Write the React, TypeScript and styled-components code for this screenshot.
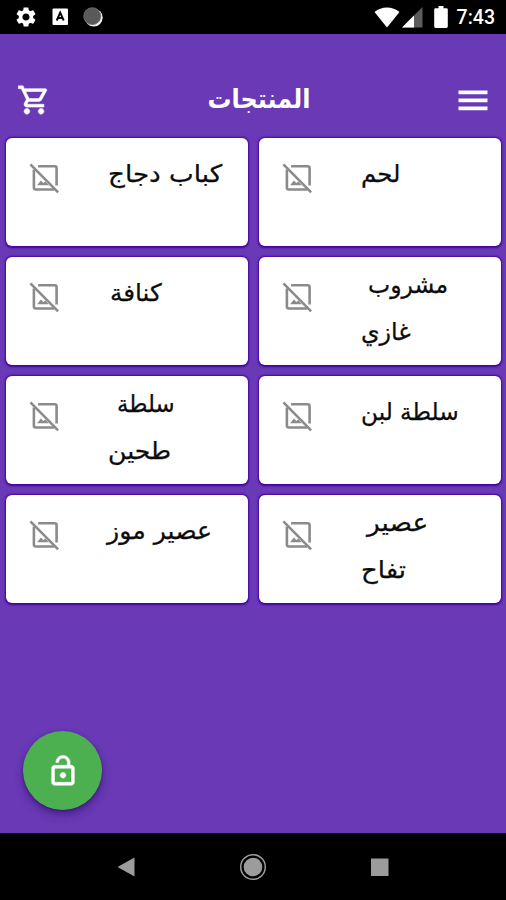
import React from "react";
import styled, { createGlobalStyle, css } from "styled-components";
import { MdOutlineShoppingCart, MdLockOpen, MdSettings } from "react-icons/md";

const Global = createGlobalStyle`
  * { box-sizing: border-box; }
  body { margin: 0; background: #000; }
  svg { display: block; flex: none; }
`;

const Screen = styled.div`
  width: 506px;
  height: 900px;
  display: flex;
  flex-direction: column;
  background: #6939b6;
  overflow: hidden;
  font-family: "DejaVu Sans", sans-serif;
`;

const StatusBar = styled.header`
  height: 34px;
  flex: none;
  display: flex;
  align-items: center;
  justify-content: space-between;
  padding: 0 11px 0 14px;
  background: #000;
  color: #fff;
`;

const StatusGroup = styled.div`
  display: flex;
  align-items: center;
`;

const Notifications = styled(StatusGroup)`
  gap: 14px;
`;

const Clock = styled.span`
  margin-left: 9px;
  padding-top: 1px;
  font: 500 19.5px/34px Roboto, sans-serif;
`;

const TopBar = styled.div`
  height: 104px;
  flex: none;
  display: flex;
  align-items: center;
  justify-content: space-between;
  padding: 28px 18px 0 17px;
  color: #fff;
`;

const boldIcon = css`
  path:not([fill="none"]) {
    stroke: currentColor;
    stroke-width: 0.4px;
  }
`;

const CartIcon = styled(MdOutlineShoppingCart)`
  ${boldIcon}
`;

const LockIcon = styled(MdLockOpen)`
  ${boldIcon}
`;

const Title = styled.h1`
  margin: 0 0 3px 8px;
  font-size: 26px;
  line-height: 40px;
  font-weight: 700;
  transform: scaleX(0.92);
`;

const Grid = styled.main`
  flex: 1;
  display: grid;
  grid-template-columns: 242px 242px;
  grid-auto-rows: 108px;
  gap: 10.9px 11px;
  align-content: start;
  padding: 0 6px;
`;

const Card = styled.article`
  display: grid;
  grid-template-columns: 102px 1fr;
  background: #fff;
  border-radius: 6px;
  box-shadow: 0 0.5px 2px 0.7px #4500a0;
`;

const Thumb = styled.div`
  padding: 23px 0 0 22px;
  color: #8b8b8b;
`;

const Name = styled.div<{ $lines: number }>`
  margin-top: ${(p) => (p.$lines > 1 ? -8 : 0)}px;
  color: #0c0c0c;
  font-size: 24px;
`;

const Line = styled.div<{ $indent: number; $stretch: number }>`
  width: max-content;
  height: 47px;
  margin-left: ${(p) => p.$indent}px;
  line-height: 72px;
  white-space: nowrap;
  transform: scaleX(${(p) => p.$stretch});
  transform-origin: left;
  -webkit-text-stroke: 0.25px currentColor;
`;

const FabRow = styled.div`
  flex: none;
  padding: 0 23px 23px;
`;

const Fab = styled.button`
  width: 79px;
  height: 79px;
  display: flex;
  align-items: center;
  justify-content: center;
  padding: 0;
  border: 0;
  border-radius: 50%;
  background: #4caf50;
  color: #fff;
  box-shadow: 0 5px 8px rgba(30, 0, 80, 0.4), 0 1px 3px rgba(30, 0, 80, 0.4);
`;

const NavBar = styled.nav`
  height: 67px;
  flex: none;
  display: flex;
  align-items: center;
  justify-content: center;
  gap: 99px;
  background: #000;
`;

type NameLine = { text: string; indent?: number; stretch?: number };

const products: NameLine[][] = [
  [{ text: "كباب دجاج", stretch: 1.092 }],
  [{ text: "لحم", stretch: 1.02 }],
  [{ text: "كنافة", indent: 1.5, stretch: 1.03 }],
  [{ text: "مشروب", indent: 7, stretch: 0.98 }, { text: "غازي", stretch: 0.99 }],
  [{ text: "سلطة", indent: 9, stretch: 0.95 }, { text: "طحين", stretch: 1.05 }],
  [{ text: "سلطة لبن", stretch: 0.967 }],
  [{ text: "عصير موز", indent: -1, stretch: 1.05 }],
  [{ text: "عصير", indent: 6, stretch: 1.1 }, { text: "تفاح", stretch: 1.08 }],
];

const KeyboardIcon = () => (
  <svg width="17" height="18" viewBox="0 0 17 18">
    <rect x="0.5" y="0.5" width="15.5" height="16.5" rx="1" fill="#fff" />
    <path d="M4.7 12.5 8.2 4.5 11.7 12.5M6 10h4.4" fill="none" stroke="#000" strokeWidth="1.9" />
  </svg>
);

const SyncIcon = () => (
  <svg width="20" height="20" viewBox="0 0 20 20">
    <circle cx="10.8" cy="10.6" r="8.9" fill="#f2f2f2" />
    <circle cx="9.3" cy="9.2" r="8.5" fill="#5a5a5a" stroke="#777" strokeWidth="0.8" />
  </svg>
);

const WifiIcon = () => (
  <svg width="26" height="21" viewBox="0 0 26 21">
    <path d="M0.5 5C7.5-1 18.5-1 25.5 5L13 20.5Z" fill="#fff" />
  </svg>
);

const SignalIcon = () => (
  <svg width="21" height="21" viewBox="0 0 21 21">
    <path d="M20.5 0V20.5H0Z" fill="#5c5c5c" />
    <path d="M12 8.5V20.5H0Z" fill="#fff" />
  </svg>
);

const BatteryIcon = () => (
  <svg width="14" height="22" viewBox="0 0 14 22">
    <path d="M4.5 0h5v2.3h3a1.3 1.3 0 0 1 1.3 1.3v17a1.3 1.3 0 0 1-1.3 1.3h-11a1.3 1.3 0 0 1-1.3-1.3v-17a1.3 1.3 0 0 1 1.3-1.3h3Z" fill="#fff" />
  </svg>
);

const SignalSlot = styled.span`
  margin: 1px 11px 0 2px;
`;

const MenuIcon = () => (
  <svg width="30" height="21" viewBox="0 0 30 21">
    <path d="M0.5 2.3H29.5M0.5 10.3H29.5M0.5 18.3H29.5" stroke="#fff" strokeWidth="3.8" />
  </svg>
);

const NoImageIcon = () => (
  <svg width="34" height="34" viewBox="0.4 0 34 34" fill="none" stroke="currentColor">
    <path d="M10.5 5.3H27Q29 5.3 29 7.3V24.5" strokeWidth="2.6" />
    <path d="M6.3 8.5V26.5Q6.3 28.500 8.3 28.5H26.5" strokeWidth="2.6" />
    <path d="M2.8 3.3 30.5 31.3" strokeWidth="2.6" />
    <path d="M9.5 24.2 13.3 19.4 15.7 22 17.6 20.5 21.2 24.2Z" fill="currentColor" stroke="none" />
  </svg>
);

export default function App() {
  return (
    <>
      <Global />
      <Screen>
        <StatusBar>
          <Notifications>
            <MdSettings size={24} />
            <KeyboardIcon />
            <SyncIcon />
          </Notifications>
          <StatusGroup>
            <WifiIcon />
            <SignalSlot><SignalIcon /></SignalSlot>
            <BatteryIcon />
            <Clock>7:43</Clock>
          </StatusGroup>
        </StatusBar>
        <TopBar>
          <CartIcon size={34} />
          <Title>المنتجات</Title>
          <MenuIcon />
        </TopBar>
        <Grid>
          {products.map((lines) => (
            <Card key={lines.map((l) => l.text).join(" ")}>
              <Thumb><NoImageIcon /></Thumb>
              <Name $lines={lines.length}>
                {lines.map((l) => (
                  <Line key={l.text} $indent={l.indent ?? 0} $stretch={l.stretch ?? 1}>{l.text}</Line>
                ))}
              </Name>
            </Card>
          ))}
        </Grid>
        <FabRow>
          <Fab aria-label="lock"><LockIcon size={34} /></Fab>
        </FabRow>
        <NavBar>
          <svg width="28" height="28" viewBox="0 0 28 28">
            <path d="M5.5 14 22.5 4.5V23.5Z" fill="#9c9c9c" />
          </svg>
          <svg width="28" height="28" viewBox="0 0 28 28">
            <circle cx="14" cy="14" r="12.3" fill="none" stroke="#9c9c9c" strokeWidth="1.5" />
            <circle cx="14" cy="14" r="9.3" fill="#9c9c9c" />
          </svg>
          <svg width="28" height="28" viewBox="0 0 28 28">
            <rect x="5" y="5.5" width="17.5" height="17.5" fill="#9c9c9c" />
          </svg>
        </NavBar>
      </Screen>
    </>
  );
}
